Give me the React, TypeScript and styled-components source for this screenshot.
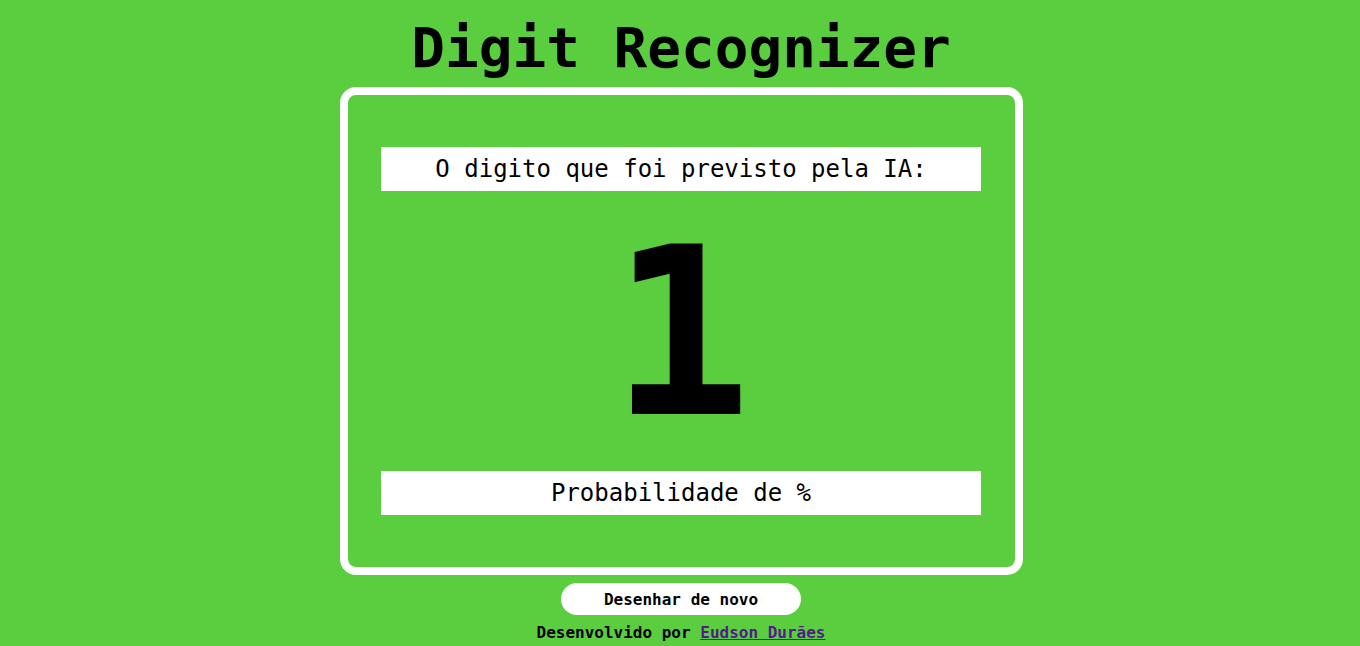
import React from "react";
import styled, { createGlobalStyle } from "styled-components";

const Global = createGlobalStyle`
  html, body {
    margin: 0;
    padding: 0;
    background: #5bce40;
    font-family: "DejaVu Sans Mono", monospace;
    color: #000;
  }
`;

const Page = styled.main`
  display: flex;
  flex-direction: column;
  align-items: center;
  padding: 15px 0 0 2px;
  min-height: 646px;
  box-sizing: border-box;
`;

const Title = styled.h1`
  margin: 0 0 7px;
  font-size: 56px;
  font-weight: bold;
  line-height: 65px;
`;

const Card = styled.section`
  box-sizing: border-box;
  width: 683px;
  border: 8px solid #fff;
  border-radius: 16px;
  padding: 52px 0;
  display: flex;
  flex-direction: column;
  align-items: center;
`;

const Bar = styled.div`
  width: 600px;
  background: #fff;
  padding: 8px 0;
  text-align: center;
  font-size: 24px;
  line-height: 28px;
`;

const Digit = styled.div`
  box-sizing: border-box;
  font-size: 234px;
  font-weight: bold;
  line-height: 276px;
  padding-top: 4px;
  height: 280px;
`;

const Button = styled.button`
  margin-top: 8px;
  width: 240px;
  height: 32px;
  border: none;
  border-radius: 16px;
  background: #fff;
  font-family: "DejaVu Sans Mono", monospace;
  font-weight: bold;
  font-size: 16px;
  color: #000;
  cursor: pointer;
`;

const Footer = styled.p`
  margin: 8px 0 0;
  font-size: 16px;
  font-weight: bold;
  line-height: 19px;
`;

const Link = styled.a`
  color: #551a8b;
  text-decoration: underline;
`;

export default function App() {
  return (
    <>
      <Global />
      <Page>
        <Title>Digit Recognizer</Title>
        <Card>
          <Bar>O digito que foi previsto pela IA:</Bar>
          <Digit>1</Digit>
          <Bar>Probabilidade de %</Bar>
        </Card>
        <Button>Desenhar de novo</Button>
        <Footer>
          Desenvolvido por <Link href="#">Eudson Durães</Link>
        </Footer>
      </Page>
    </>
  );
}
